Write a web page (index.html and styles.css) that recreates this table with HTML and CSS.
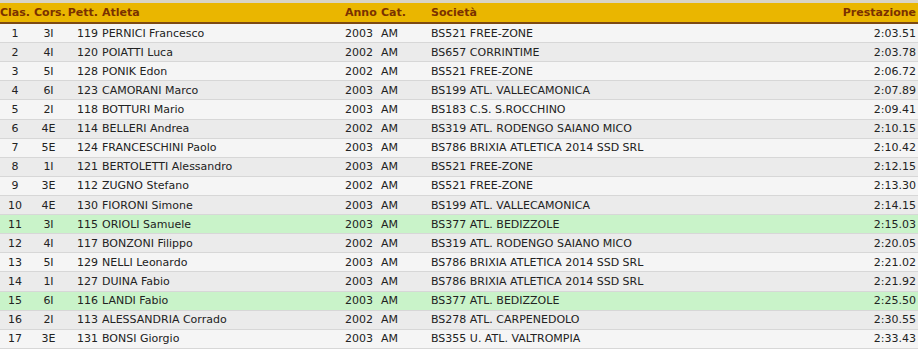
FILE: index.html
```html
<!DOCTYPE html>
<html lang="it">
<head>
<meta charset="utf-8">
<title>Classifica</title>
<link rel="stylesheet" href="styles.css">
</head>
<body>
<div class="wrap">
<table class="results">
<colgroup>
<col class="c-clas"><col class="c-cors"><col class="c-pett"><col class="c-atl"><col class="c-anno"><col class="c-cat"><col class="c-soc"><col class="c-pre">
</colgroup>
<thead>
<tr><th class="ctr">Clas.</th><th class="ctr">Cors.</th><th class="rgt">Pett.</th><th>Atleta</th><th>Anno</th><th>Cat.</th><th>Società</th><th class="rgt">Prestazione</th></tr>
</thead>
<tbody>
<tr><td class="ctr">1</td><td class="ctr">3I</td><td class="rgt">119</td><td>PERNICI Francesco</td><td>2003</td><td>AM</td><td>BS521 FREE-ZONE</td><td class="rgt">2:03.51</td></tr>
<tr><td class="ctr">2</td><td class="ctr">4I</td><td class="rgt">120</td><td>POIATTI Luca</td><td>2002</td><td>AM</td><td>BS657 CORRINTIME</td><td class="rgt">2:03.78</td></tr>
<tr><td class="ctr">3</td><td class="ctr">5I</td><td class="rgt">128</td><td>PONIK Edon</td><td>2002</td><td>AM</td><td>BS521 FREE-ZONE</td><td class="rgt">2:06.72</td></tr>
<tr><td class="ctr">4</td><td class="ctr">6I</td><td class="rgt">123</td><td>CAMORANI Marco</td><td>2003</td><td>AM</td><td>BS199 ATL. VALLECAMONICA</td><td class="rgt">2:07.89</td></tr>
<tr><td class="ctr">5</td><td class="ctr">2I</td><td class="rgt">118</td><td>BOTTURI Mario</td><td>2003</td><td>AM</td><td>BS183 C.S. S.ROCCHINO</td><td class="rgt">2:09.41</td></tr>
<tr><td class="ctr">6</td><td class="ctr">4E</td><td class="rgt">114</td><td>BELLERI Andrea</td><td>2002</td><td>AM</td><td>BS319 ATL. RODENGO SAIANO MICO</td><td class="rgt">2:10.15</td></tr>
<tr><td class="ctr">7</td><td class="ctr">5E</td><td class="rgt">124</td><td>FRANCESCHINI Paolo</td><td>2003</td><td>AM</td><td>BS786 BRIXIA ATLETICA 2014 SSD SRL</td><td class="rgt">2:10.42</td></tr>
<tr><td class="ctr">8</td><td class="ctr">1I</td><td class="rgt">121</td><td>BERTOLETTI Alessandro</td><td>2003</td><td>AM</td><td>BS521 FREE-ZONE</td><td class="rgt">2:12.15</td></tr>
<tr><td class="ctr">9</td><td class="ctr">3E</td><td class="rgt">112</td><td>ZUGNO Stefano</td><td>2002</td><td>AM</td><td>BS521 FREE-ZONE</td><td class="rgt">2:13.30</td></tr>
<tr><td class="ctr">10</td><td class="ctr">4E</td><td class="rgt">130</td><td>FIORONI Simone</td><td>2003</td><td>AM</td><td>BS199 ATL. VALLECAMONICA</td><td class="rgt">2:14.15</td></tr>
<tr class="hl"><td class="ctr">11</td><td class="ctr">3I</td><td class="rgt">115</td><td>ORIOLI Samuele</td><td>2003</td><td>AM</td><td>BS377 ATL. BEDIZZOLE</td><td class="rgt">2:15.03</td></tr>
<tr><td class="ctr">12</td><td class="ctr">4I</td><td class="rgt">117</td><td>BONZONI Filippo</td><td>2002</td><td>AM</td><td>BS319 ATL. RODENGO SAIANO MICO</td><td class="rgt">2:20.05</td></tr>
<tr><td class="ctr">13</td><td class="ctr">5I</td><td class="rgt">129</td><td>NELLI Leonardo</td><td>2003</td><td>AM</td><td>BS786 BRIXIA ATLETICA 2014 SSD SRL</td><td class="rgt">2:21.02</td></tr>
<tr><td class="ctr">14</td><td class="ctr">1I</td><td class="rgt">127</td><td>DUINA Fabio</td><td>2003</td><td>AM</td><td>BS786 BRIXIA ATLETICA 2014 SSD SRL</td><td class="rgt">2:21.92</td></tr>
<tr class="hl"><td class="ctr">15</td><td class="ctr">6I</td><td class="rgt">116</td><td>LANDI Fabio</td><td>2003</td><td>AM</td><td>BS377 ATL. BEDIZZOLE</td><td class="rgt">2:25.50</td></tr>
<tr><td class="ctr">16</td><td class="ctr">2I</td><td class="rgt">113</td><td>ALESSANDRIA Corrado</td><td>2002</td><td>AM</td><td>BS278 ATL. CARPENEDOLO</td><td class="rgt">2:30.55</td></tr>
<tr><td class="ctr">17</td><td class="ctr">3E</td><td class="rgt">131</td><td>BONSI Giorgio</td><td>2003</td><td>AM</td><td>BS355 U. ATL. VALTROMPIA</td><td class="rgt">2:33.43</td></tr>
</tbody>
</table>
</div>
</body>
</html>
```

FILE: styles.css
```css
html, body {
  margin: 0;
  padding: 0;
  background: #ffffff;
}

.wrap {
  width: 918px;
  border-top: 3px solid #d9d4c6;
}

.results {
  width: 918px;
  table-layout: fixed;
  border-collapse: separate;
  border-spacing: 0;
  font-family: "DejaVu Sans", Verdana, sans-serif;
  font-size: 11px;
  color: #222222;
}

.c-clas { width: 32px; }
.c-cors { width: 33px; }
.c-pett { width: 35px; }
.c-atl { width: 243px; }
.c-anno { width: 36px; }
.c-cat { width: 50px; }
.c-soc { width: 300px; }
.c-pre { width: auto; }

.results th {
  background: #eab600;
  color: #7a3100;
  font-weight: bold;
  text-align: left;
  height: 21px;
  padding: 0 2px;
  border-bottom: 2px solid #7d4a12;
  white-space: nowrap;
  box-sizing: border-box;
}

.results td {
  height: 19.12px;
  padding: 0 2px;
  border-bottom: 1px solid #d7d7d7;
  white-space: nowrap;
  overflow: hidden;
  box-sizing: border-box;
}

.results th:first-child,
.results td:first-child {
  padding-left: 0;
}

.results tbody tr:nth-child(odd) td { background: #f5f5f5; }
.results tbody tr:nth-child(even) td { background: #ebebeb; }
.results tbody tr.hl td { background: #c9f3c9; }

.ctr { text-align: center; }
.results .rgt { text-align: right; }
.results th.ctr { text-align: left; }
```
